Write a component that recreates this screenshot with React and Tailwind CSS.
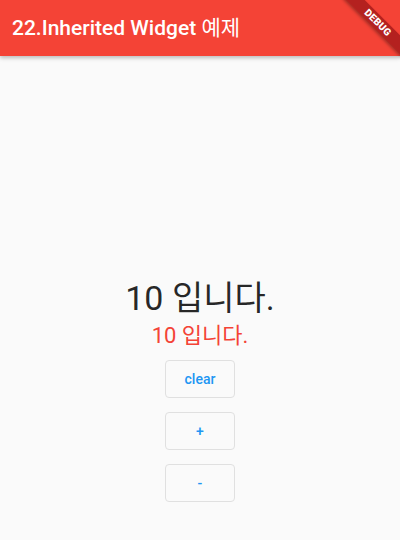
import React, { useState } from 'react';

const font = { fontFamily: 'Roboto, "Noto Sans CJK KR", sans-serif' };

const OutlineButton = ({ label, onClick }) => (
  <button
    onClick={onClick}
    className="w-[70px] h-[38px] rounded-[4px] border border-[#e0e0e0] bg-[#fafafa] text-[#2196f3] text-[14px] font-medium leading-none flex items-center justify-center"
  >
    {label}
  </button>
);

export default function App() {
  const [count, setCount] = useState(10);

  return (
    <div className="relative w-[400px] h-[540px] overflow-hidden bg-[#fafafa]" style={font}>
      {/* App bar */}
      <div className="relative z-10 h-[56px] bg-[#f44336] flex items-center px-[12px] shadow-[0_2px_4px_rgba(0,0,0,0.25)]">
        <h1 className="text-white text-[21px] font-medium leading-none">
          22.Inherited Widget <span className="font-normal">예제</span>
        </h1>
      </div>

      {/* Debug banner */}
      <div className="absolute z-20 left-[336px] top-[16px] w-[84px] h-[13px] rotate-45 bg-[#a81b1b]/85 flex items-center justify-center shadow-[0_2px_3px_rgba(0,0,0,0.3)]">
        <span className="text-white text-[10px] font-black leading-none tracking-[0.3px]">DEBUG</span>
      </div>

      {/* Body */}
      <div className="flex flex-col items-center pt-[222px]">
        <p className="text-[34px] leading-[40px] text-black/85">{count} 입니다.</p>
        <p className="mt-[5px] text-[22px] leading-[26px] text-[#f44336]">{count} 입니다.</p>
        <div className="mt-[11px] flex flex-col items-center gap-[14px]">
          <OutlineButton label="clear" onClick={() => setCount(0)} />
          <OutlineButton label="+" onClick={() => setCount(count + 1)} />
          <OutlineButton label="-" onClick={() => setCount(count - 1)} />
        </div>
      </div>
    </div>
  );
}
